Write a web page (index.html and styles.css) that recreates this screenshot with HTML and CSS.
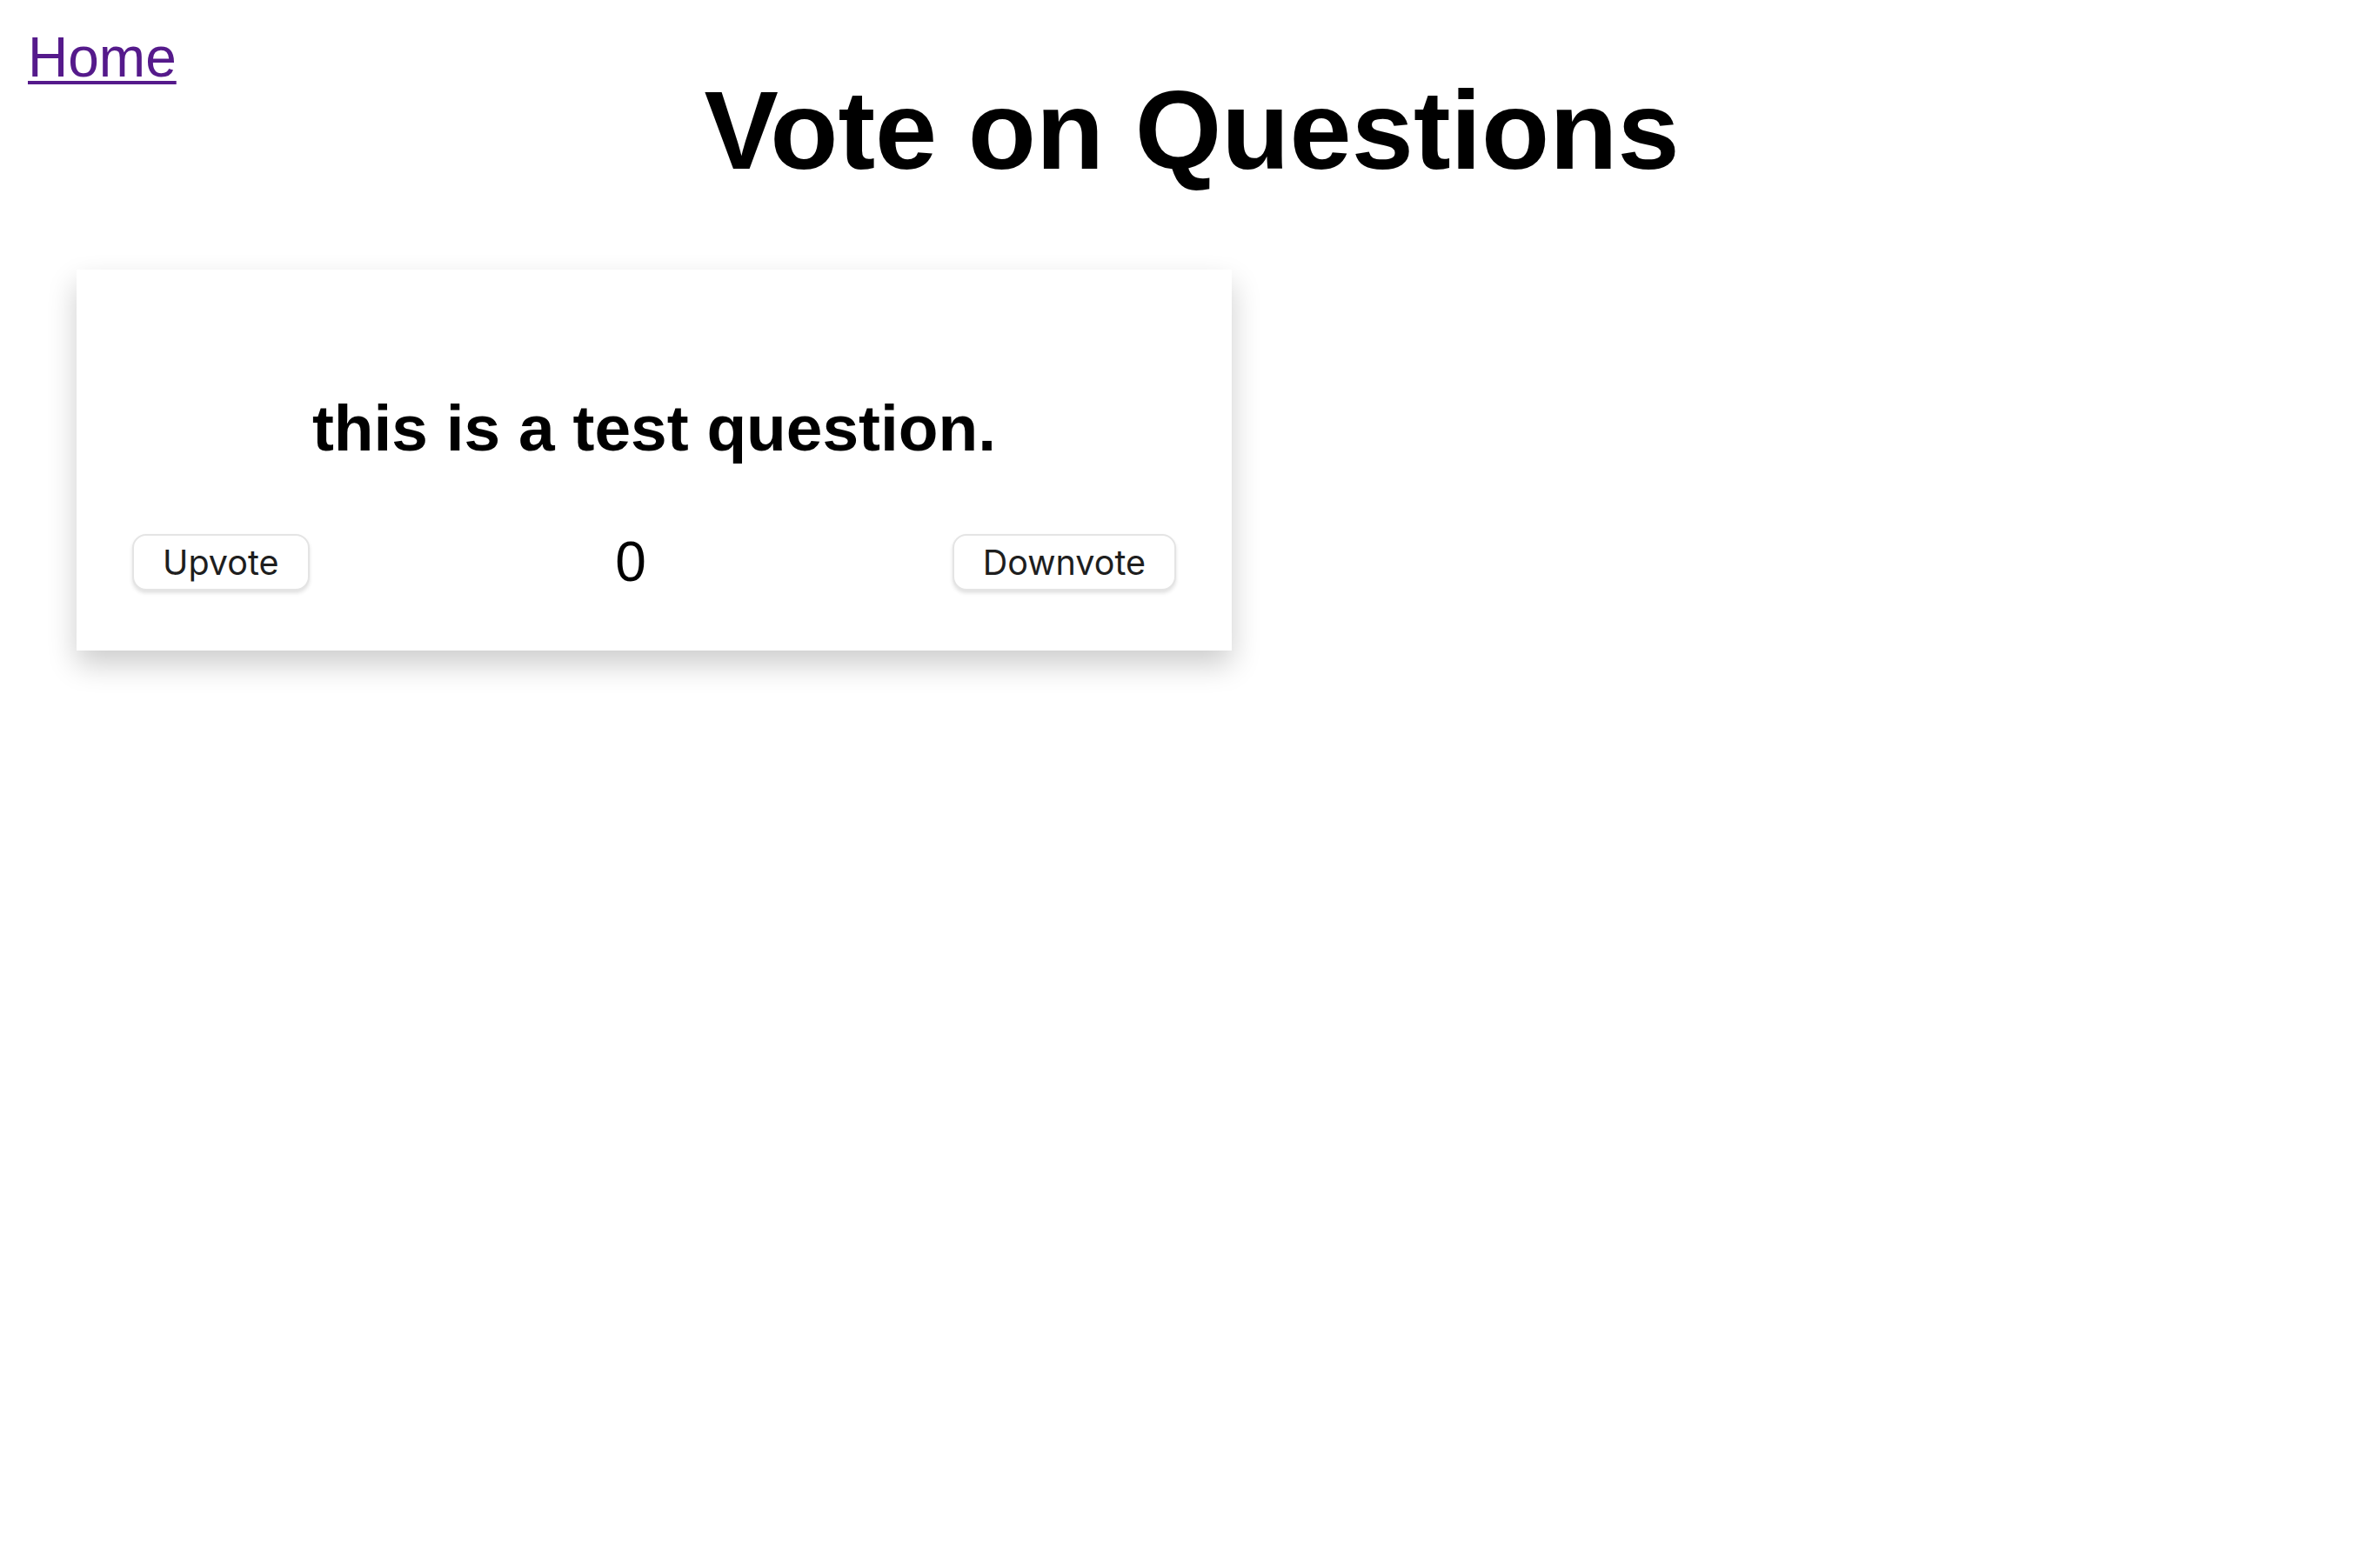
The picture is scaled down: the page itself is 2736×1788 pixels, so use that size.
FILE: index.html
```html
<!DOCTYPE html>
<html lang="en">
<head>
<meta charset="utf-8">
<title>Vote on Questions</title>
<link rel="stylesheet" href="styles.css">
</head>
<body>
  <nav class="nav"><a class="home" href="#">Home</a></nav>
  <h1 class="title">Vote on Questions</h1>
  <main class="cards">
    <section class="card">
      <h3 class="question">this is a test question.</h3>
      <div class="vote-row">
        <button class="vote-btn" type="button">Upvote</button>
        <span class="count">0</span>
        <button class="vote-btn" type="button">Downvote</button>
      </div>
    </section>
  </main>
</body>
</html>
```

FILE: styles.css
```css
html, body {
  background: #ffffff;
}

body {
  box-sizing: border-box;
  min-height: 100vh;
  margin: 0;
  padding: 0 32px 64px;
  font-family: "Liberation Sans", Arial, Helvetica, sans-serif;
  color: #000;
}

.nav {
  padding-top: 34px;
  font-size: 64px;
  line-height: 64px;
}

.home {
  color: #551a8b;
  text-decoration: underline;
  text-decoration-thickness: 4px;
  text-underline-offset: 5px;
}

.title {
  margin: 0 0 108px;
  padding-left: 4px;
  font-size: 128px;
  line-height: 104px;
  font-weight: bold;
  text-align: center;
}

.cards {
  display: flex;
  padding-left: 56px;
  padding-bottom: 80px;
}

.card {
  box-sizing: border-box;
  width: 1328px;
  padding: 64px;
  background: #fff;
  box-shadow: 0 16px 32px 0 rgba(0, 0, 0, 0.2);
}

.question {
  margin: 75px 0;
  font-size: 74.88px;
  font-weight: bold;
  text-align: center;
}

.vote-row {
  display: flex;
  justify-content: space-between;
  align-items: center;
}

.count {
  font-size: 64px;
  line-height: 73.6px;
}

.vote-btn {
  box-sizing: border-box;
  height: 65px;
  padding: 0 33px;
  font-family: Inter, "Noto Sans", sans-serif;
  font-size: 39.5px;
  font-weight: 400;
  color: #1e1e1e;
  background: #fff;
  border: 2px solid #e4e4e4;
  border-radius: 16px;
  box-shadow: 0 3px 4px rgba(0, 0, 0, 0.12);
  cursor: pointer;
}
```
